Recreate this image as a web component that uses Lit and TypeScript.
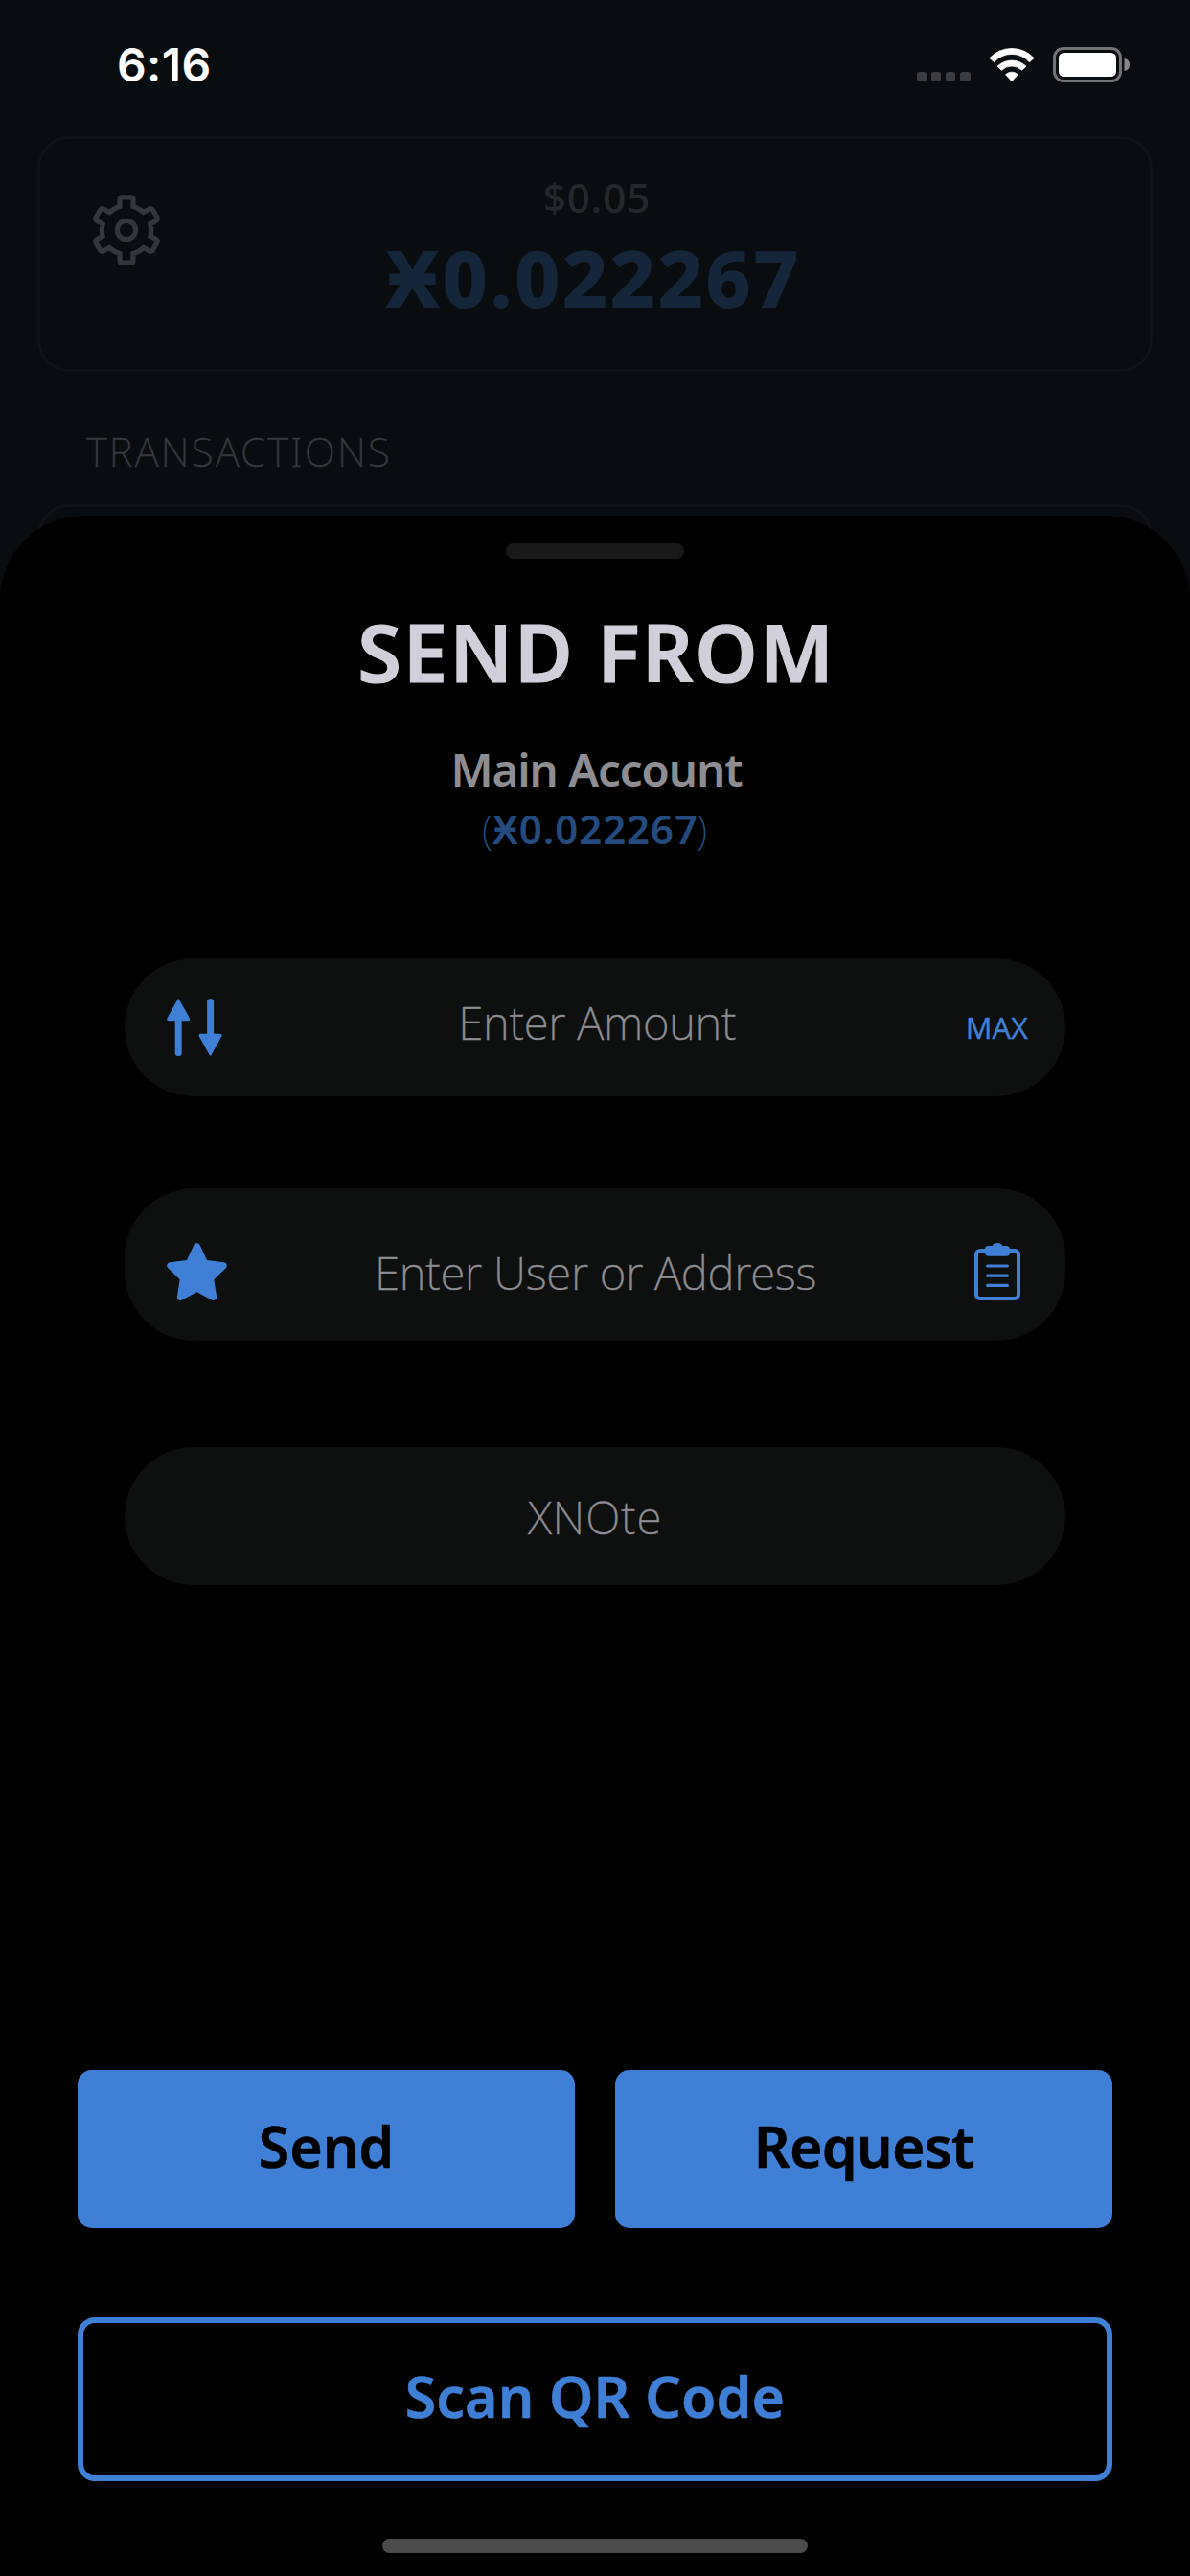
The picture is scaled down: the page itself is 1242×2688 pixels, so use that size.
import { LitElement, html, css, svg } from "lit";
import { customElement } from "lit/decorators.js";

/** Outline of a six-toothed cog centred on 0,0. */
function cogPath(): string {
  const body = 25.6;
  const half = 7;
  const top = 34.2;
  const round = 2.5;
  const base = Math.sqrt(body * body - half * half);
  const parts: string[] = [];
  for (let i = 0; i < 6; i++) {
    const a = (i * Math.PI) / 3;
    const p = (x: number, y: number) =>
      `${(x * Math.cos(a) - y * Math.sin(a)).toFixed(2)} ${(x * Math.sin(a) + y * Math.cos(a)).toFixed(2)}`;
    parts.push(
      i === 0 ? `M${p(-half, -base)}` : `A${body} ${body} 0 0 1 ${p(-half, -base)}`,
      `L${p(-half, -top + round)}Q${p(-half, -top)} ${p(-half + round, -top)}`,
      `L${p(half - round, -top)}Q${p(half, -top)} ${p(half, -top + round)}`,
      `L${p(half, -base)}`,
    );
  }
  parts.push(`A${body} ${body} 0 0 1 ${-half} ${-base.toFixed(2)}Z`);
  return parts.join("");
}

const cogIcon = svg`<svg class="cog" viewBox="-37 -37 74 74" width="74" height="74" fill="none" stroke="#34373a" stroke-width="5.2">
  <path d=${cogPath()}></path><circle r="9.6"></circle></svg>`;

const wifiIcon = svg`<svg viewBox="0 0 48 37" width="48" height="37" fill="#fff" stroke="#fff" stroke-width=".8" stroke-linejoin="round">
  <path d="M.8 11.6A31.6 31.6 0 0 1 47.2 11.6L42.4 15.7A24.5 24.5 0 0 0 5.6 15.7Z"></path>
  <path d="M9 20.2A21.5 21.5 0 0 1 39 20.2L34.6 24.3A15.2 15.2 0 0 0 13.4 24.3Z"></path>
  <path d="M17.6 28.7A9.3 9.3 0 0 1 30.4 28.7L24 35.8Z"></path></svg>`;

const batteryIcon = svg`<svg viewBox="0 0 80 37" width="80" height="37">
  <rect x="1.5" y="1.5" width="69" height="34" rx="9.5" fill="none" stroke="#717375" stroke-width="3"></rect>
  <rect x="6" y="6" width="60" height="25" rx="5.5" fill="#fff"></rect>
  <path d="M74.5 12A6.6 6.6 0 0 1 74.5 25Z" fill="#85878a"></path></svg>`;

const swapIcon = svg`<svg viewBox="0 0 58 60" width="58" height="60" fill="#407fd6" stroke="#407fd6" stroke-linejoin="round" stroke-linecap="round">
  <path stroke-width="1.6" d="M12.2 1.2L1 21.2Q1 22.4 2 22.4H22.4Q23.4 22.4 23.4 21.2Z"></path>
  <path stroke-width="7" d="M12.2 22V56.5"></path>
  <path stroke-width="1.6" d="M45.6 58.8L34.4 38.8Q34.4 37.6 35.4 37.6H55.8Q56.8 37.6 56.8 38.8Z"></path>
  <path stroke-width="7" d="M45.6 38V3.5"></path></svg>`;

const starIcon = svg`<svg viewBox="0 0 63 60" width="63" height="60" fill="#407fd6" stroke="#407fd6" stroke-width="7" stroke-linejoin="round">
  <path d="M31.5 3.7L39.7 21.2L59.2 23.7L45.6 37L48.6 56.4L31.5 47.2L14.4 56.4L17.4 37L3.8 23.7L23.3 21.2Z"></path></svg>`;

const clipboardIcon = svg`<svg viewBox="0 0 48 60" width="48" height="60" fill="none" stroke="#407fd6" stroke-width="4">
  <rect x="2" y="8" width="44" height="50" rx="4"></rect>
  <g stroke="none" fill="#407fd6">
    <rect x="11" y="3" width="26" height="10.7" rx="3.6"></rect>
    <ellipse cx="24" cy="4.6" rx="5.6" ry="4.6"></ellipse>
  </g>
  <path stroke-width="3.2" stroke-linecap="round" d="M13.6 24H34.4M13.6 34.2H34.4M13.6 44.4H34.4"></path></svg>`;

@customElement("status-bar")
export class StatusBar extends LitElement {
  static styles = css`
    :host { display: flex; justify-content: space-between; box-sizing: border-box; height: 142px; padding: 38px 63px 0 122px; }
    .time { font: 600 48px/60px Inter, sans-serif; color: #fff; letter-spacing: 0.4px; }
    .icons { display: flex; padding-top: 11px; }
    .dots { display: flex; gap: 4.8px; padding: 26px 19px 0 0; }
    .dot { width: 10.3px; height: 10px; border-radius: 3px; background: #3c3d41; }
    .wifi { margin-right: 19.5px; }
    svg { display: block; }
  `;
  render() {
    return html`<span class="time">6:16</span>
      <div class="icons">
        <div class="dots">${[0, 1, 2, 3].map(() => html`<i class="dot"></i>`)}</div>
        <div class="wifi">${wifiIcon}</div>
        ${batteryIcon}
      </div>`;
  }
}

@customElement("send-sheet")
export class SendSheet extends LitElement {
  static styles = css`
    :host {
      display: flex; flex-direction: column; align-items: center; box-sizing: border-box;
      padding-top: 29px; background: #000; border-radius: 88px 88px 0 0;
      font-family: "Noto Sans", sans-serif;
    }
    svg { display: block; }
    .handle { width: 186px; height: 16px; border-radius: 8px; background: #191919; }
    h1 { margin: 47px 0 0; padding-left: 3px; font-weight: 600; font-size: 83px; line-height: 100px; letter-spacing: 2px; color: #d1d0da; -webkit-text-stroke: 1.2px #d1d0da; }
    .account { margin-top: 43px; font-weight: 600; font-size: 47.5px; line-height: 60px; letter-spacing: -1.05px; color: #8e8d92; padding-left: 3px; }
    .amount { margin-top: 7px; font-weight: 600; font-size: 42px; line-height: 50px; letter-spacing: 0.93px; color: #244a7e; display: flex; }
    .paren { font-weight: 200; width: 8px; display: flex; justify-content: center; }
    .open { padding-right: 1px; }
    .fields { margin-top: 110px; display: flex; flex-direction: column; width: 982px; }
    .field {
      display: grid; grid-template-columns: 1fr auto 1fr; align-items: center; box-sizing: border-box;
      height: 144px; border-radius: 72px; background: #0e100f; padding: 0 39px 0 43.5px;
      font-weight: 200; font-size: 47.5px; color: #8e8d92;
    }
    .placeholder { grid-column: 2; letter-spacing: -0.3px; -webkit-text-stroke: 0.4px #8e8d92; }
    .trail { grid-column: 3; justify-self: end; }
    .value { padding-bottom: 12px; }
    .user { margin-top: 96px; height: 159px; padding-right: 47.5px; padding-top: 15px; }
    .user .placeholder { padding-left: 5px; }
    .note { margin-top: 111px; padding: 0 43px; }
    .note .placeholder { letter-spacing: 0.8px; }
    .max { font-weight: 400; font-size: 30.6px; color: #407fd6; -webkit-text-stroke: 0.3px #407fd6; }
    .actions { margin-top: 506px; width: 1080px; display: grid; grid-template-columns: 1fr 1fr; column-gap: 42px; row-gap: 93px; }
    .button {
      display: flex; align-items: center; justify-content: center; box-sizing: border-box;
      height: 165px; padding-bottom: 7px; border-radius: 15px; background: #407fd6; color: #000;
      font-weight: 600; font-size: 59px; -webkit-text-stroke: 0.6px currentColor;
    }
    .send { letter-spacing: 0; }
    .request { letter-spacing: -0.7px; }
    .scan { grid-column: 1 / 3; height: 171px; padding-bottom: 8px; background: none; border: 6px solid #407fd6; border-radius: 18px; color: #407fd6; letter-spacing: 0.15px; }
    .home { margin-top: 60px; width: 444px; height: 15px; border-radius: 8px; background: #4c4c4c; }
  `;
  render() {
    return html`
      <div class="handle"></div>
      <h1>SEND FROM</h1>
      <div class="account">Main Account</div>
      <div class="amount"><span class="paren open">(</span><span>Ӿ0.022267</span><span class="paren">)</span></div>
      <div class="fields">
        <div class="field">${swapIcon}<span class="placeholder value">Enter Amount</span><span class="trail max">MAX</span></div>
        <div class="field user">${starIcon}<span class="placeholder">Enter User or Address</span><span class="trail">${clipboardIcon}</span></div>
        <div class="field note"><span class="placeholder">XNOte</span></div>
      </div>
      <div class="actions">
        <div class="button send">Send</div>
        <div class="button request">Request</div>
        <div class="button scan">Scan QR Code</div>
      </div>
      <div class="home"></div>`;
  }
}

@customElement("app-root")
export class AppRoot extends LitElement {
  static styles = css`
    :host { display: block; position: relative; width: 1242px; height: 2688px; overflow: hidden; background: #090d10; font-family: "Noto Sans", sans-serif; }
    .card { box-sizing: border-box; margin: 0 39px; border: 3px solid #0f1315; border-radius: 33px; }
    .balance { display: grid; grid-template-columns: 1fr auto 1fr; height: 246px; padding: 36px 0 0 53px; }
    .cog { display: block; margin-top: 22px; }
    .totals { display: flex; flex-direction: column; align-items: center; margin-left: -57px; }
    .fiat { font-weight: 500; font-size: 42px; line-height: 50px; letter-spacing: 1px; color: #25282b; padding-left: 8px; }
    .nano { margin-top: 13px; font-weight: 800; font-size: 82.5px; line-height: 90px; letter-spacing: 2.14px; color: #16263a; }
    h2 { margin: 58px 0 0 90px; font-weight: 200; font-size: 42px; line-height: 50px; letter-spacing: 2.24px; color: #37393c; -webkit-text-stroke: 0.4px #37393c; }
    .list { margin-top: 30px; height: 300px; }
    .sheet { position: absolute; left: 0; right: 0; top: 538px; bottom: 0; }
  `;
  render() {
    return html`
      <status-bar></status-bar>
      <div class="card balance">
        ${cogIcon}
        <div class="totals"><span class="fiat">$0.05</span><span class="nano">Ӿ0.022267</span></div>
      </div>
      <h2>TRANSACTIONS</h2>
      <div class="card list"></div>
      <send-sheet class="sheet"></send-sheet>`;
  }
}
